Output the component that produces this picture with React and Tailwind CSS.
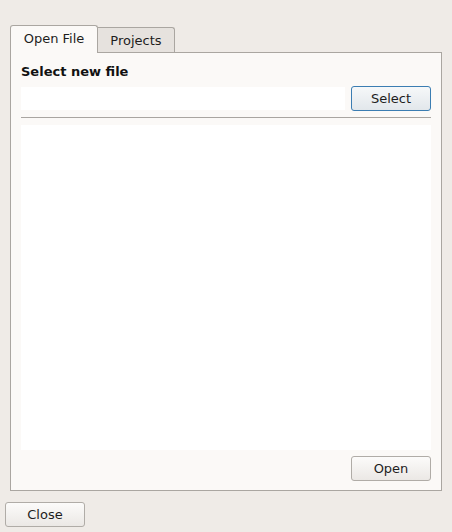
import React, { useState } from "react";

const FONT = { fontFamily: '"DejaVu Sans", "Liberation Sans", sans-serif' };

function PushButton({ children, isDefault, className = "" }) {
  return (
    <button
      className={`h-[25px] w-[80px] rounded-[3px] border text-[13px] text-[#1d1d1d] ${
        isDefault
          ? "border-[#3b7db2] bg-gradient-to-b from-[#f6f8f9] to-[#e2e7eb]"
          : "border-[#b0aca7] bg-gradient-to-b from-[#fcfbfa] to-[#ebe8e5]"
      } ${className}`}
    >
      {children}
    </button>
  );
}

export default function App() {
  const [tab, setTab] = useState("open");
  const [path, setPath] = useState("");

  return (
    <div className="w-[452px] h-[532px] bg-[#efebe7] flex flex-col pt-[25px]" style={FONT}>
      <div className="mx-[10px] flex items-end h-[27px]">
        <button
          onClick={() => setTab("open")}
          className="relative z-10 h-[28px] w-[88px] -mb-px border border-b-0 border-[#aaa6a1] rounded-t-[3px] bg-[#fbf9f7] text-[13px] text-[#1d1d1d] pb-[2px]"
        >
          Open File
        </button>
        <button
          onClick={() => setTab("projects")}
          className="h-[25px] w-[77px] border border-l-0 border-b-0 border-[#aaa6a1] rounded-tr-[3px] bg-[#e6e2de] text-[13px] text-[#1d1d1d] pt-[2px]"
        >
          Projects
        </button>
      </div>

      <div className="mx-[10px] h-[439px] border border-[#aaa6a1] bg-[#fbf9f7] px-[10px] pt-[11px] pb-[9px] flex flex-col">
        <div className="h-[16px] leading-[16px] text-[13px] font-bold text-[#111]">Select new file</div>
        <div className="mt-[6px] h-[25px] flex items-center justify-between">
          <input
            value={path}
            onChange={(e) => setPath(e.target.value)}
            className="h-[23px] w-[324px] bg-white outline-none text-[13px] px-1"
          />
          <PushButton isDefault>Select</PushButton>
        </div>
        <div className="mt-[6px] h-px bg-[#a9a5a1]" />
        <div className="mt-[7px] h-[325px] bg-white" />
        <div className="mt-[6px] flex justify-end">
          <PushButton>Open</PushButton>
        </div>
      </div>

      <div className="mt-[11px] pl-[5px]">
        <PushButton>Close</PushButton>
      </div>
    </div>
  );
}
